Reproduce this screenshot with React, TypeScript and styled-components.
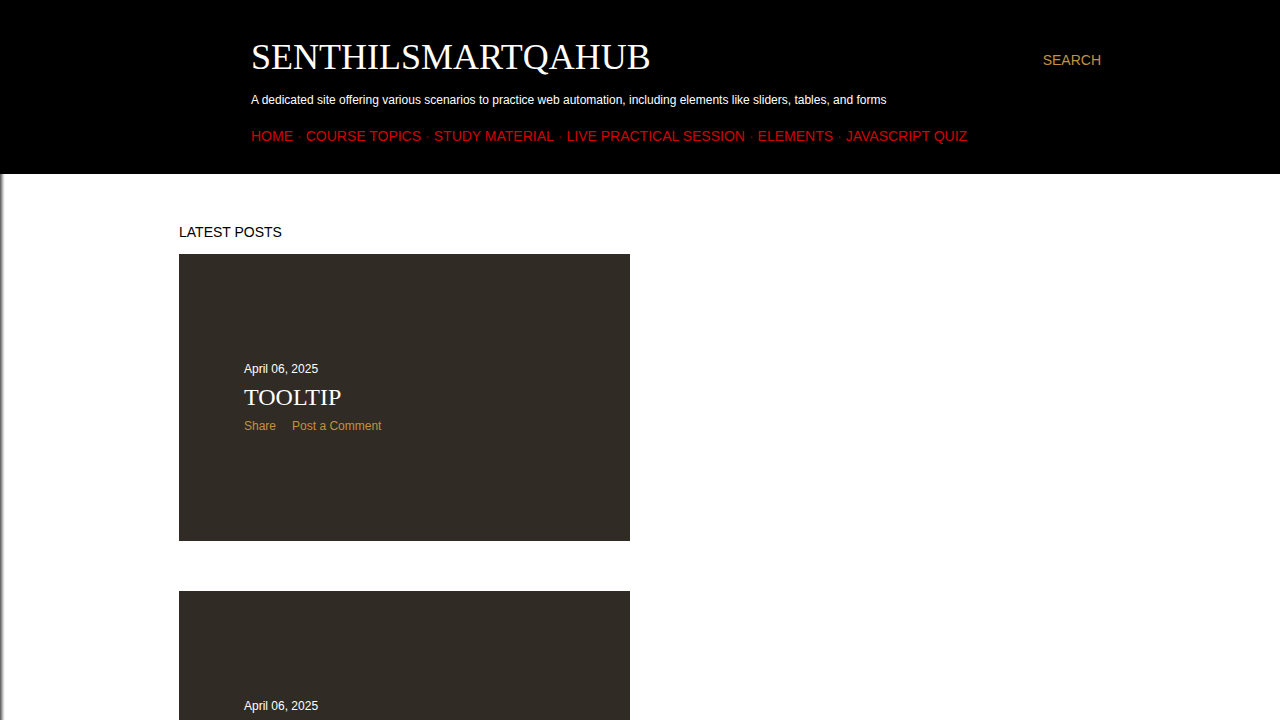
import React from "react";
import styled, { createGlobalStyle } from "styled-components";

const Global = createGlobalStyle`
  html, body { margin: 0; padding: 0; background: #ffffff; }
  body { font-family: "Liberation Sans", Arial, sans-serif; overflow: hidden; }
`;

const Page = styled.div`
  width: 1280px;
  height: 720px;
  overflow: hidden;
  background: #ffffff;
`;

const Header = styled.header`
  background: #000000;
  height: 174px;
  box-sizing: border-box;
  padding: 37px 179px 0 251px;
  display: flex;
  justify-content: space-between;
  align-items: flex-start;
`;

const Brand = styled.div`
  display: flex;
  flex-direction: column;
`;

const Title = styled.h1`
  margin: 0;
  font-family: "Liberation Serif", "Times New Roman", serif;
  font-weight: 400;
  font-size: 36px;
  line-height: 41px;
  color: #ffffff;
`;

const Description = styled.p`
  margin: 15px 0 0;
  font-size: 12px;
  line-height: 14px;
  color: #ffffff;
`;

const Nav = styled.nav`
  margin-top: 21px;
  display: flex;
  font-size: 14px;
  line-height: 16px;
  color: #d40000;
`;

const NavLink = styled.a`
  color: #d40000;
  text-decoration: none;
`;

const Dot = styled.span`
  color: #8a0000;
  padding: 0 4px;
`;

const Search = styled.a`
  margin-top: 15px;
  font-size: 14px;
  line-height: 16px;
  color: #c6903e;
  text-decoration: none;
`;

const Main = styled.main`
  position: relative;
  padding: 50px 0 0 179px;
  &::before {
    content: "";
    position: absolute;
    left: 0;
    top: 0;
    bottom: 0;
    width: 5px;
    background: linear-gradient(to right, #555 0%, #999 35%, #e6e6e6 75%, #ffffff 100%);
  }
`;

const SectionTitle = styled.h3`
  margin: 0 0 14px;
  font-size: 14px;
  line-height: 16px;
  font-weight: 400;
  color: #000000;
`;

const PostList = styled.div`
  display: flex;
  flex-direction: column;
  gap: 50px;
`;

const Card = styled.article`
  width: 451px;
  height: 287px;
  background: #312b25;
  box-sizing: border-box;
  padding-left: 65px;
  display: flex;
  flex-direction: column;
  justify-content: center;
`;

const PostDate = styled.div`
  font-size: 12px;
  line-height: 14px;
  font-weight: 400;
  color: #ffffff;
`;

const PostTitle = styled.h2`
  margin: 7px 0 0;
  font-family: "Liberation Serif", "Times New Roman", serif;
  font-weight: 400;
  font-size: 24px;
  line-height: 28px;
  color: #ffffff;
`;

const Actions = styled.div`
  margin-top: 8px;
  display: flex;
  gap: 16px;
  font-size: 12px;
  line-height: 14px;
`;

const Action = styled.a`
  color: #c6903e;
  text-decoration: none;
`;

const navItems = [
  "HOME",
  "COURSE TOPICS",
  "STUDY MATERIAL",
  "LIVE PRACTICAL SESSION",
  "ELEMENTS",
  "JAVASCRIPT QUIZ",
];

const posts = [
  { date: "April 06, 2025", title: "TOOLTIP" },
  { date: "April 06, 2025", title: "SLIDER" },
];

export default function App() {
  return (
    <Page>
      <Global />
      <Header>
        <Brand>
          <Title>SENTHILSMARTQAHUB</Title>
          <Description>
            A dedicated site offering various scenarios to practice web automation, including elements like sliders, tables, and forms
          </Description>
          <Nav>
            {navItems.map((item, i) => (
              <React.Fragment key={item}>
                {i > 0 && <Dot>·</Dot>}
                <NavLink href="#">{item}</NavLink>
              </React.Fragment>
            ))}
          </Nav>
        </Brand>
        <Search href="#">SEARCH</Search>
      </Header>
      <Main>
        <SectionTitle>LATEST POSTS</SectionTitle>
        <PostList>
          {posts.map((p, i) => (
            <Card key={i}>
              <PostDate>{p.date}</PostDate>
              <PostTitle>{p.title}</PostTitle>
              <Actions>
                <Action href="#">Share</Action>
                <Action href="#">Post a Comment</Action>
              </Actions>
            </Card>
          ))}
        </PostList>
      </Main>
    </Page>
  );
}
